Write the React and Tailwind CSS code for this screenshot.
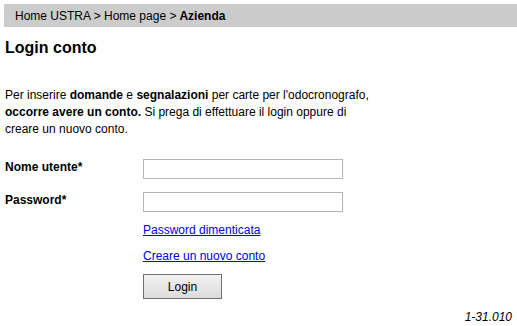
export default function App() {
    return (
        <div className="min-h-[326px] bg-white pl-[4px] pt-[4px] text-black" style={{ fontFamily: '"Liberation Sans", Arial, sans-serif' }}>
            <div className="flex h-[23px] items-center bg-[#cccccc] pl-[11px] text-[12px]">
                Home USTRA &gt; Home page &gt; <span className="ml-[3px] font-bold">Azienda</span>
            </div>

            <h1 className="mt-[11px] pl-[1px] text-[16px] font-bold leading-[20px]">Login conto</h1>

            <p className="mt-[29px] pl-[1px] text-[12px] leading-[17px]">
                Per inserire <b>domande</b> e <b>segnalazioni</b> per carte per l'odocronografo,<br />
                <b>occorre avere un conto.</b> Si prega di effettuare il login oppure di<br />
                creare un nuovo conto.
            </p>

            <form onSubmit={e => e.preventDefault()} className="mt-[20px] text-[12px]">
                <div className="flex items-center">
                    <label className="w-[139px] pl-[1px] pb-[3px] font-bold">Nome utente*</label>
                    <input type="text" className="h-[20px] w-[200px] border border-[#b4b4b4] bg-white outline-none" />
                </div>
                <div className="mt-[12px] flex items-center">
                    <label className="w-[139px] pl-[1px] pb-[3px] font-bold">Password*</label>
                    <input type="password" className="h-[20px] w-[200px] border border-[#b4b4b4] bg-white outline-none" />
                </div>

                <div className="ml-[139px]">
                    <a href="#" className="mt-[10px] block w-fit text-[12px] leading-[17px] text-[#0000ee] underline">Password dimenticata</a>
                    <a href="#" className="mt-[9px] block w-fit text-[12px] leading-[17px] text-[#0000ee] underline">Creare un nuovo conto</a>
                    <button type="submit" className="mt-[9px] h-[25px] w-[79px] border border-[#707070] bg-gradient-to-b from-[#f2f2f2] to-[#dcdcdc] text-[12px] text-black">
                        Login
                    </button>
                </div>
            </form>

            <div className="mt-[11px] pr-[5px] text-right text-[12px] italic leading-[14px]">1-31.010</div>
        </div>
    );
}
